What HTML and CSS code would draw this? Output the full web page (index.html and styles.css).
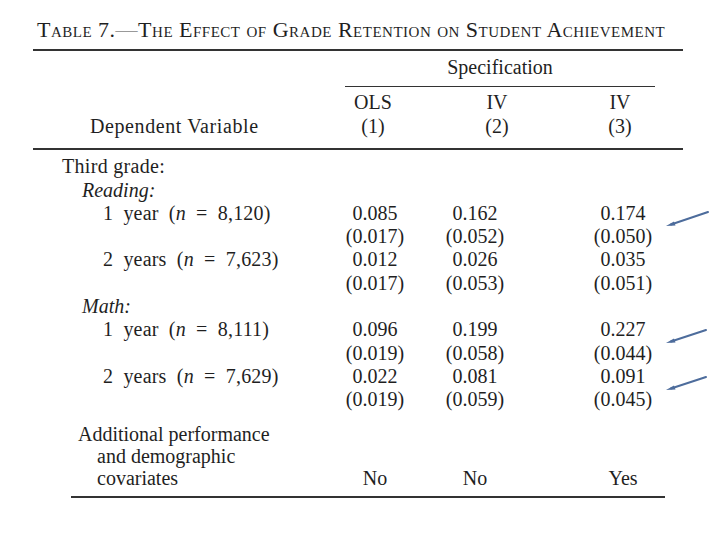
FILE: index.html
```html
<!DOCTYPE html>
<html>
<head>
<meta charset="utf-8">
<link rel="stylesheet" href="styles.css">
</head>
<body>
<div class="page">
  <h1 class="title">Table 7.<span class="dash">—</span>The Effect of Grade Retention on Student Achievement</h1>
  <div class="table">
    <div class="head">
      <div class="spec">Specification</div>
      <div class="row hrow">
        <div class="lab dep">Dependent Variable</div>
        <div class="c1">OLS<br>(1)</div>
        <div class="c2">IV<br>(2)</div>
        <div class="c3">IV<br>(3)</div>
      </div>
    </div>
    <div class="body">
      <div class="row"><div class="lab l0">Third grade:</div></div>
      <div class="row"><div class="lab l1"><i>Reading:</i></div></div>
      <div class="row"><div class="lab l2">1 year (<i>n</i> = 8,120)</div><div class="c1">0.085</div><div class="c2">0.162</div><div class="c3">0.174</div></div>
      <div class="row"><div class="lab"></div><div class="c1">(0.017)</div><div class="c2">(0.052)</div><div class="c3">(0.050)</div></div>
      <div class="row"><div class="lab l2">2 years (<i>n</i> = 7,623)</div><div class="c1">0.012</div><div class="c2">0.026</div><div class="c3">0.035</div></div>
      <div class="row"><div class="lab"></div><div class="c1">(0.017)</div><div class="c2">(0.053)</div><div class="c3">(0.051)</div></div>
      <div class="row"><div class="lab l1"><i>Math:</i></div></div>
      <div class="row"><div class="lab l2">1 year (<i>n</i> = 8,111)</div><div class="c1">0.096</div><div class="c2">0.199</div><div class="c3">0.227</div></div>
      <div class="row"><div class="lab"></div><div class="c1">(0.019)</div><div class="c2">(0.058)</div><div class="c3">(0.044)</div></div>
      <div class="row"><div class="lab l2">2 years (<i>n</i> = 7,629)</div><div class="c1">0.022</div><div class="c2">0.081</div><div class="c3">0.091</div></div>
      <div class="row"><div class="lab"></div><div class="c1">(0.019)</div><div class="c2">(0.059)</div><div class="c3">(0.045)</div></div>
    </div>
    <div class="row cov">
      <div class="lab covlab">Additional performance<br><span class="ind">and demographic</span><br><span class="ind">covariates</span></div>
      <div class="c1 end">No</div>
      <div class="c2 end">No</div>
      <div class="c3 end">Yes</div>
    </div>
    <div class="endrule"></div>
  </div>
  <svg class="arrows" width="720" height="540" viewBox="0 0 720 540">
    <g stroke="#4d6c9c" stroke-width="2" stroke-linecap="round" fill="#4d6c9c">
      <line x1="708" y1="212" x2="671" y2="224.5"/>
      <line x1="706" y1="330" x2="671" y2="341.5"/>
      <line x1="706" y1="377" x2="671" y2="388.5"/>
    </g>
    <g fill="#4d6c9c">
      <polygon points="666,226 674,221.5 675.5,225.5"/>
      <polygon points="666,343 674,338.5 675.5,342.5"/>
      <polygon points="666,390 674,385.5 675.5,389.5"/>
    </g>
  </svg>
</div>
</body>
</html>
```
FILE: styles.css
```css
html, body {
  margin: 0;
  padding: 0;
  background: #ffffff;
}
.page {
  position: relative;
  width: 720px;
  height: 540px;
  font-family: "Liberation Serif", "Times New Roman", serif;
  color: #1f1f1f;
  font-size: 20px;
  padding-top: 18px;
  box-sizing: border-box;
  overflow: hidden;
}
.title {
  margin: 0 0 6px 37px;
  font-size: 22px;
  font-weight: normal;
  font-variant: small-caps;
  line-height: 24px;
  height: 25px;
  white-space: nowrap;
  letter-spacing: 0.5px;
}
.dash {
  color: #999;
}
.table {
  margin-left: 33px;
  width: 650px;
  border-top: 2px solid #333;
}
.spec {
  margin-left: 312px;
  width: 310px;
  text-align: center;
  line-height: 23.3px;
  padding-top: 5px;
  padding-bottom: 7px;
  border-bottom: 1.5px solid #333;
}
.row {
  display: grid;
  grid-template-columns: 312px 60px 40px 60px 88px 60px;
  line-height: 23.3px;
  white-space: nowrap;
}
.hrow {
  grid-template-columns: 312px 56px 66px 60px 63px 60px;
  line-height: 24px;
  padding-top: 3px;
  padding-bottom: 10px;
  border-bottom: 2px solid #333;
}
.body {
  padding-top: 5px;
}
.lab { grid-column: 1; }
.c1 { grid-column: 2; text-align: center; }
.c2 { grid-column: 4; text-align: center; }
.c3 { grid-column: 6; text-align: center; }
.hrow .lab { align-self: end; }
.dep {
  padding-left: 57px;
  letter-spacing: 0.6px;
}
.l0 {
  padding-left: 29px;
  letter-spacing: 0.3px;
}
.l1 { padding-left: 49px; }
.l2 {
  padding-left: 70px;
  word-spacing: 5px;
  letter-spacing: 0.2px;
}
.cov {
  line-height: 22px;
  margin-top: 11px;
}
.covlab { padding-left: 45px; }
.ind { padding-left: 19px; }
.end { align-self: end; }
.endrule {
  margin-top: 7px;
  margin-left: 38px;
  width: 594px;
  border-top: 2px solid #333;
}
.arrows {
  position: absolute;
  left: 0;
  top: 0;
}
```
